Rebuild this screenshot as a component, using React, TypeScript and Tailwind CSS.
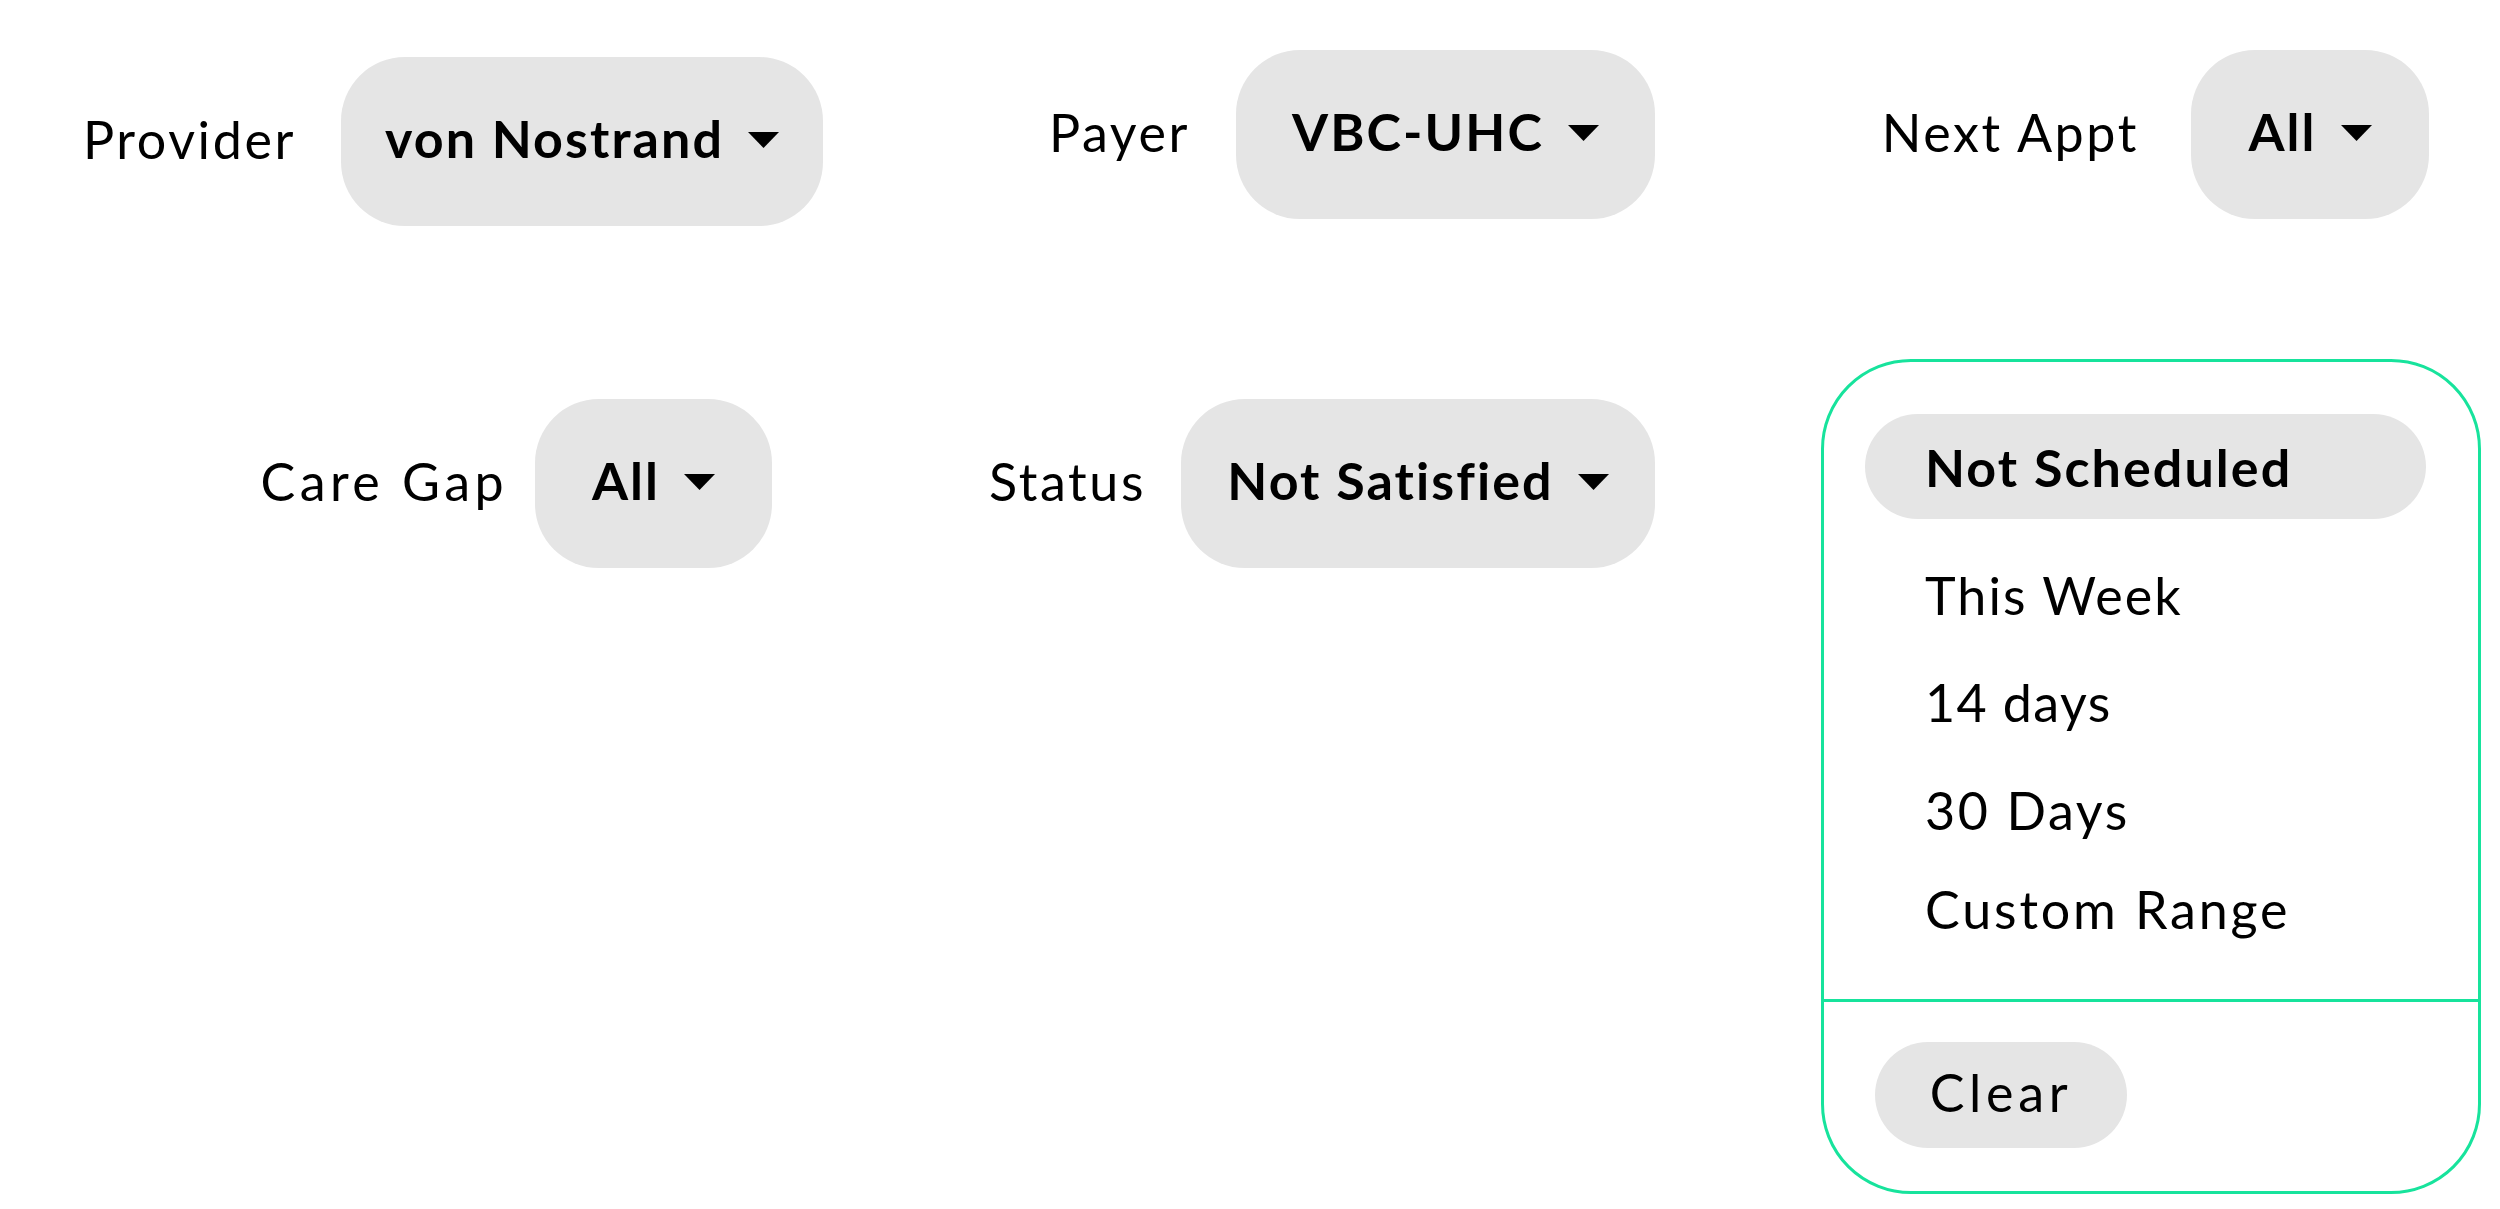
import { useState } from 'react';

// Filter bar mock: pill selects with a label, plus an open "Next Appt" menu

function Caret() {
  return (
    <svg width="31" height="16" viewBox="0 0 31 16" className="shrink-0">
      <path d="M0 0 H31 L15.5 16 Z" fill="#000" />
    </svg>
  );
}

interface FilterProps {
  label: string;
  value: string;
  wrapClass: string;
  pillClass: string;
  gapClass: string;
  labelClass?: string;
}

function Filter({ label, value, wrapClass, pillClass, gapClass, labelClass = 'tracking-[0.05em]' }: FilterProps) {
  return (
    <div className={`flex items-center justify-end shrink-0 ${gapClass} ${wrapClass}`}>
      <span className={`pb-[6px] text-[52px] leading-none text-black whitespace-nowrap ${labelClass}`}>
        {label}
      </span>
      <button
        type="button"
        className={`flex items-center justify-center gap-[24px] h-[169px] pb-[4px] rounded-[64px] bg-[#e5e5e5] shrink-0 ${pillClass}`}
      >
        <span className="pb-[4px] text-[52px] leading-none font-bold tracking-[0.04em] text-black whitespace-nowrap">
          {value}
        </span>
        <Caret />
      </button>
    </div>
  );
}

const options = [
  { label: 'This Week', cls: 'mt-[46px] tracking-[0.04em]' },
  { label: '14 days', cls: 'mt-[47px] tracking-[0.027em]' },
  { label: '30 Days', cls: 'mt-[48px] tracking-[0.05em]' },
  { label: 'Custom Range', cls: 'mt-[39px] tracking-[0.055em]' },
];

export default function App() {
  const [selected] = useState('Not Scheduled');

  return (
    <div className="min-h-screen w-[2500px] bg-white font-['Lato',sans-serif] text-black">
      {/* Fila 1 */}
      <div className="flex items-start pt-[50px]">
        <Filter
          label="Provider"
          value="von Nostrand"
          wrapClass="w-[823px] mt-[7px]"
          pillClass="w-[482px]"
          gapClass="gap-[45px]"
        />
        <Filter
          label="Payer"
          value="VBC-UHC"
          wrapClass="w-[832px]"
          pillClass="w-[419px]"
          gapClass="gap-[46px]"
        />
        <Filter
          label="Next Appt"
          value="All"
          wrapClass="w-[774px]"
          pillClass="w-[238px]"
          gapClass="gap-[52px]"
        />
      </div>

      {/* Fila 2 */}
      <div className="flex items-start mt-[133px]">
        <Filter
          label="Care Gap"
          value="All"
          wrapClass="w-[772px] mt-[40px]"
          pillClass="w-[237px]"
          gapClass="gap-[27px]"
          labelClass="tracking-[0.085em]"
        />
        <Filter
          label="Status"
          value="Not Satisfied"
          wrapClass="w-[883px] mt-[40px]"
          pillClass="w-[474px]"
          gapClass="gap-[35px]"
        />

        {/* Menú desplegado */}
        <div className="ml-[166px] w-[660px] h-[835px] shrink-0 flex flex-col border-[3px] border-[#17e39c] rounded-[90px]">
          <div className="flex flex-col pt-[52px]">
            <div className="ml-[41px] mr-[52px] h-[105px] rounded-full bg-[#e5e5e5] flex items-center pl-[60px]">
              <span className="text-[52px] leading-[60px] font-bold tracking-[0.04em]">{selected}</span>
            </div>
            {options.map((opt) => (
              <div key={opt.label} className={`pl-[101px] text-[52px] leading-[60px] ${opt.cls}`}>
                {opt.label}
              </div>
            ))}
          </div>
          <div className="mt-[60px] border-t-[3px] border-[#17e39c] pt-[40px]">
            <button
              type="button"
              className="ml-[51px] w-[252px] h-[106px] pb-[6px] rounded-full bg-[#e5e5e5] flex items-center justify-center text-[52px] leading-none tracking-[0.09em]"
            >
              Clear
            </button>
          </div>
        </div>
      </div>
    </div>
  );
}
